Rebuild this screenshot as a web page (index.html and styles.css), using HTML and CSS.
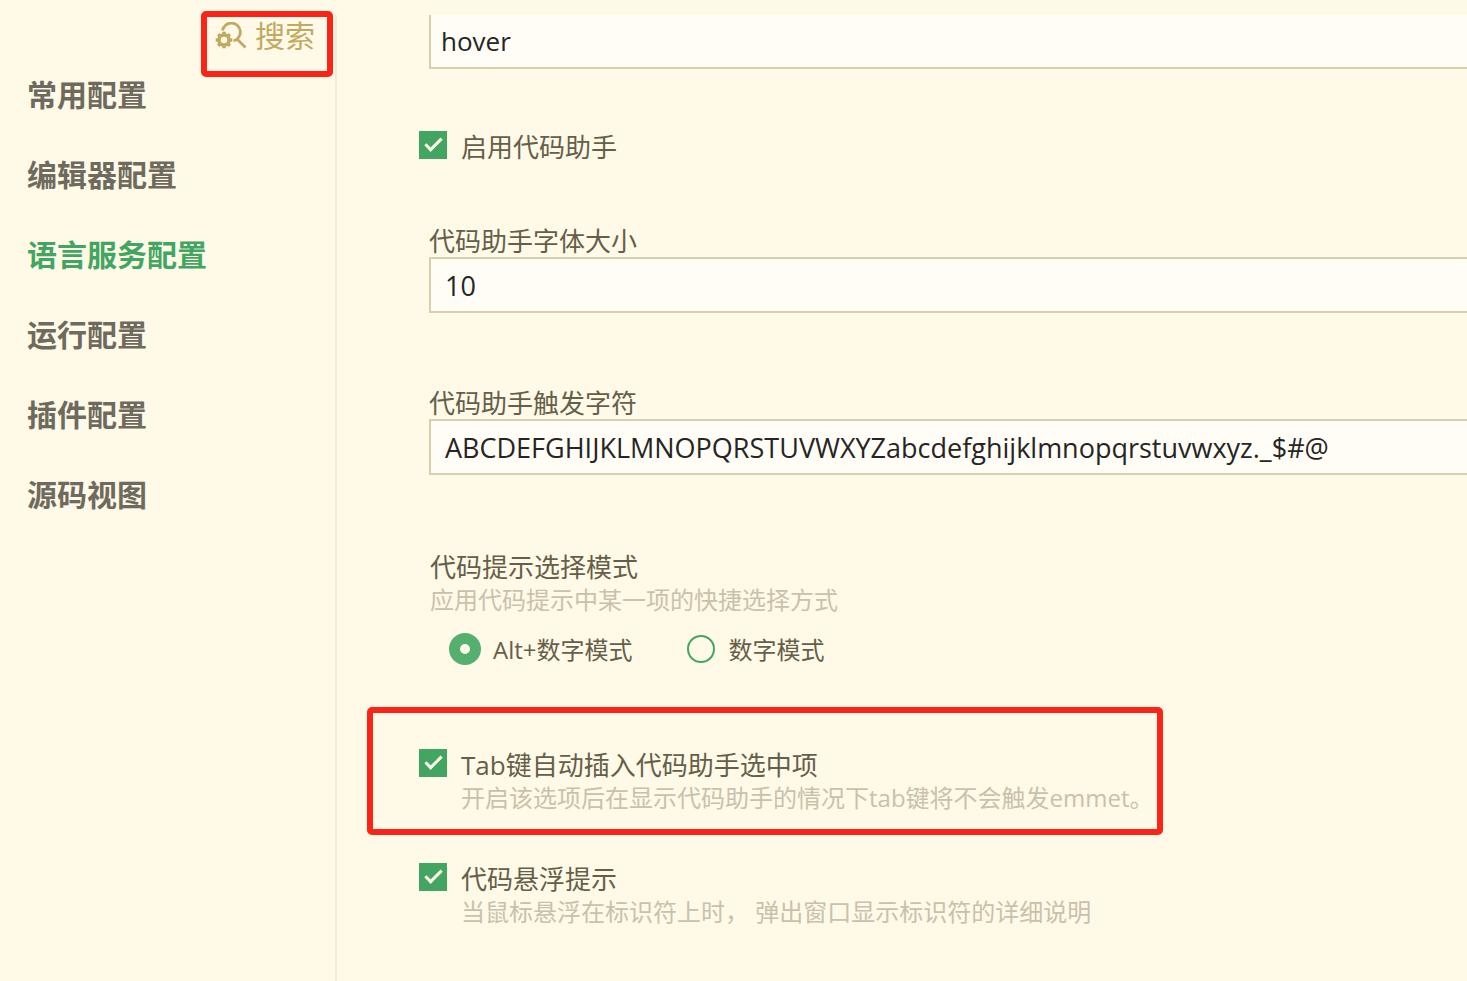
FILE: index.html
```html
<!DOCTYPE html>
<html lang="zh-CN">
<head>
  <meta charset="UTF-8" />
  <meta name="viewport" content="width=device-width, initial-scale=1.0" />
  <title>语言服务配置</title>
  <link rel="stylesheet" href="styles.css">
</head>
<body>
  <aside class="sidebar">
    <button type="button" class="search">
      <svg class="search-icon" viewBox="0 0 32 28" width="32" height="28" fill="none" stroke="currentColor">
        <path d="M7.500 8.500A9 9 0 1 1 18.500 18.800M21.500 16.500L30.500 25.500" stroke-width="2.800" />
        <circle cx="9" cy="18" r="5" stroke-width="3.400" />
        <path d="M9 13V9.700M9 23V26.300M4 18H.7M14 18H17.300M5.500 14.500L3.200 12.200M12.500 14.500L14.800 12.200M5.500 21.500L3.200 23.800M12.500 21.500L14.800 23.800" stroke-width="3.600" />
      </svg>
      搜索
    </button>
    <nav class="menu">
      <a href="#common">常用配置</a>
      <a href="#editor">编辑器配置</a>
      <a href="#language" class="active">语言服务配置</a>
      <a href="#run">运行配置</a>
      <a href="#plugin">插件配置</a>
      <a href="#source">源码视图</a>
    </nav>
  </aside>
  <main>
    <form>
      <input class="text-input cut" type="text" aria-label="触发方式" value="hover" />

      <div class="check">
        <input type="checkbox" id="assist" checked />
        <label for="assist">启用代码助手</label>
      </div>

      <div class="field">
        <label for="fontSize">代码助手字体大小</label>
        <input class="text-input" type="text" id="fontSize" value="10" />
      </div>

      <div class="field">
        <label for="trigger">代码助手触发字符</label>
        <input class="text-input" type="text" id="trigger" value="ABCDEFGHIJKLMNOPQRSTUVWXYZabcdefghijklmnopqrstuvwxyz._$#@" />
      </div>

      <fieldset>
        <legend>代码提示选择模式</legend>
        <p class="hint">应用代码提示中某一项的快捷选择方式</p>
        <div class="radios">
          <label><input type="radio" name="mode" checked />Alt+数字模式</label>
          <label><input type="radio" name="mode" />数字模式</label>
        </div>
      </fieldset>

      <div class="check marked">
        <input type="checkbox" id="tabInsert" checked />
        <div>
          <label for="tabInsert">Tab键自动插入代码助手选中项</label>
          <p class="hint">开启该选项后在显示代码助手的情况下tab键将不会触发emmet。</p>
        </div>
      </div>

      <div class="check">
        <input type="checkbox" id="hoverTip" checked />
        <div>
          <label for="hoverTip">代码悬浮提示</label>
          <p class="hint">当鼠标悬浮在标识符上时， 弹出窗口显示标识符的详细说明</p>
        </div>
      </div>
    </form>
  </main>
</body>
</html>
```
FILE: styles.css
```css
*, *::before, *::after {
  box-sizing: border-box;
}
body {
  display: flex;
  min-height: 100vh;
  margin: 0;
  padding-top: 15px;
  background: #fff9e7;
  color: #655f49;
  font-family: "Open Sans", "Noto Sans CJK SC", sans-serif;
  font-size: 26px;
  line-height: 32px;
  overflow-x: hidden;
}
input, button {
  font-family: inherit;
  margin: 0;
}

/* sidebar */
.sidebar {
  flex: none;
  width: 337px;
  border-right: 2px solid #f1ead4;
}
.search {
  position: relative;
  display: flex;
  align-items: center;
  gap: 8px;
  margin-left: auto;
  padding: 0 20px 0 0;
  border: none;
  background: none;
  color: #c0aa62;
  font-size: 30px;
  line-height: 42px;
  cursor: pointer;
}
.search::after {
  content: "";
  position: absolute;
  top: -4px;
  right: 2px;
  bottom: -20px;
  left: -14px;
  border: 6px solid #fc2416;
  border-radius: 5px;
}
.menu {
  display: flex;
  flex-direction: column;
  gap: 40px;
  padding: 18px 0 0 27px;
}
.menu a {
  color: #6e6a5e;
  font-size: 30px;
  font-weight: bold;
  line-height: 40px;
  text-decoration: none;
}
.menu a.active {
  color: #42a662;
}

/* settings */
main {
  flex: 1;
  min-width: 0;
  padding-left: 82px;
}
.field {
  margin: 0 0 74px 10px;
}
.field label {
  display: block;
}
.text-input {
  display: block;
  width: 100%;
  height: 56px;
  padding: 0 14px;
  border: 2px solid #d8cfad;
  border-right: none;
  border-radius: 0;
  background: #fffdf6;
  color: #252525;
  font-size: 27px;
  outline: none;
}
.text-input.cut {
  width: calc(100% - 10px);
  height: 54px;
  margin: 0 0 62px 10px;
  padding: 0 10px;
  border-top: none;
  font-size: 26px;
}
.check {
  display: flex;
  align-items: flex-start;
  gap: 14px;
  margin-bottom: 62px;
}
.check input {
  flex: none;
  appearance: none;
  width: 28px;
  height: 28px;
  background: #42a662;
}
.check input:checked::before {
  content: "";
  display: block;
  width: 17px;
  height: 9px;
  margin: 7px 0 0 6px;
  border: solid #fff9e7;
  border-width: 0 0 3px 3px;
  transform: rotate(-45deg);
}
.hint {
  margin: 0;
  padding-top: 1px;
  color: #c9c1ab;
  font-size: 24px;
  white-space: nowrap;
}
fieldset {
  margin: 76px 0 82px;
  padding: 0 0 0 11px;
  border: none;
}
legend {
  padding: 0;
}
.radios {
  display: flex;
  gap: 52px;
  padding: 17px 0 0 19px;
}
.radios label {
  display: flex;
  align-items: flex-start;
  gap: 12px;
  font-size: 24px;
  line-height: 34px;
}
.radios input {
  appearance: none;
  width: 28px;
  height: 28px;
  margin: 2px;
  border: 2px solid #42a662;
  border-radius: 50%;
}
.radios input:checked {
  width: 32px;
  height: 32px;
  margin: 0;
  border: 11px solid #55af6e;
  background: #fff9e7;
}
.marked {
  position: relative;
  width: fit-content;
  margin-bottom: 49px;
}
.marked::after {
  content: "";
  position: absolute;
  top: -42px;
  right: -9px;
  bottom: -21px;
  left: -52px;
  border: 6px solid #fc2416;
  border-radius: 5px;
  pointer-events: none;
}
```
